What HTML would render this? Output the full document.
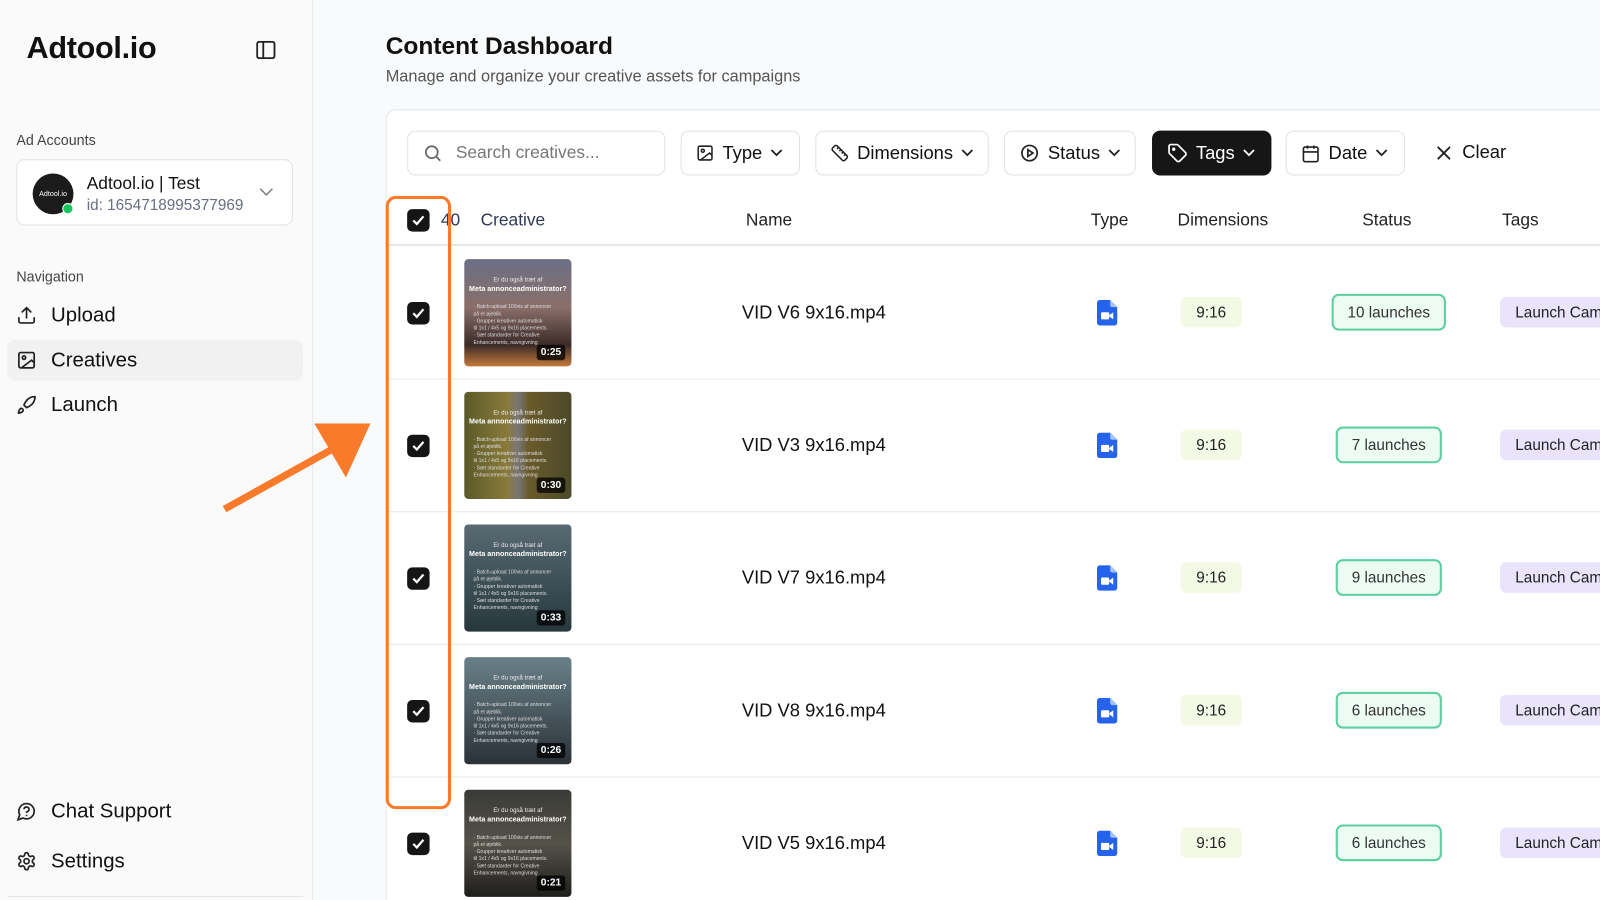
<!DOCTYPE html>
<html><head><meta charset="utf-8"><style>
*{box-sizing:border-box;margin:0;padding:0}
html,body{width:1600px;height:900px;overflow:hidden;background:#f9fafb;font-family:"Liberation Sans",sans-serif;color:#111}
#w{width:1568px;height:882px;transform:scale(1.0204);transform-origin:0 0;position:relative}
.a{position:absolute}
.side{left:0;top:0;width:307px;height:882px;background:#fafafa;border-right:1px solid #e8e8e8}
.logo{left:26px;top:31px;font-size:30px;font-weight:bold;letter-spacing:-0.3px}
.lbl{font-size:14px;color:#444}
.nav{font-size:20px;color:#111}
.card{left:378px;top:107px;width:1300px;height:800px;background:#fff;border:1px solid #e6e7ea;border-radius:10px}
.btn{top:128px;height:44px;border:1px solid #e2e2e2;border-radius:8px;background:#fff;display:flex;align-items:center;padding:0 14px;font-size:18px;gap:8px}
.hdr{top:206px;font-size:17px;color:#222}
.cb{width:22px;height:22px;background:#151515;border-radius:5px;display:flex;align-items:center;justify-content:center}
.thumb{width:105px;height:105px;border-radius:4px;overflow:hidden}
.thumb .t1{position:absolute;left:0;right:0;top:18px;text-align:center;font-size:6px;color:#eee}
.thumb .t2{position:absolute;left:0;right:0;top:26px;text-align:center;font-size:7px;color:#fff;font-weight:bold}
.thumb .b{position:absolute;left:9px;top:44px;font-size:5px;color:#ddd;line-height:7px}
.thumb .d{position:absolute;right:6px;bottom:6px;background:rgba(0,0,0,.75);color:#fff;font-size:10px;font-weight:bold;padding:2px 4px;border-radius:3px}
.nm{font-size:18px}
.dim{width:60px;height:30px;background:#f3f9e4;border-radius:6px;font-size:15px;display:flex;align-items:center;justify-content:center;color:#222}
.st{height:36px;border:2px solid #5bcf9f;background:#ecfbf3;border-radius:7px;font-size:15px;display:flex;align-items:center;justify-content:center;color:#333}
.tag{left:1470px;width:120px;height:30px;background:#e9e4fc;border-radius:6px;font-size:15px;display:flex;align-items:center;padding-left:15px;color:#222;white-space:nowrap}
.sep{left:379px;width:1200px;height:1px;background:#e8e8e8}
</style></head><body><div id="w">
<div class="a side"></div>
<div class="a logo">Adtool.io</div>
<svg class="a" style="left:251px;top:40px" width="19" height="18" viewBox="0 0 19 18" fill="none" stroke="#222" stroke-width="1.8"><rect x="1" y="1" width="17" height="16" rx="2"/><line x1="7" y1="1" x2="7" y2="17"/></svg>
<div class="a lbl" style="left:16px;top:129px">Ad Accounts</div>
<div class="a" style="left:16px;top:156px;width:271px;height:65px;background:#fff;border:1px solid #e3e3e3;border-radius:8px"></div>
<div class="a" style="left:32px;top:170px;width:40px;height:40px;border-radius:50%;background:#1b1b1b;color:#fff;font-size:7px;display:flex;align-items:center;justify-content:center">Adtool.io</div>
<div class="a" style="left:61px;top:199px;width:11px;height:11px;border-radius:50%;background:#16c55a;border:1.5px solid #fff"></div>
<div class="a" style="left:85px;top:170px;font-size:17px">Adtool.io | Test</div>
<div class="a" style="left:85px;top:193px;font-size:15px;color:#666e80">id: 1654718995377969</div>
<svg class="a" style="left:254px;top:184px" width="14" height="9" viewBox="0 0 14 9" fill="none" stroke="#777" stroke-width="1.4"><path d="M1 1l6 6 6-6"/></svg>
<div class="a lbl" style="left:16px;top:263px">Navigation</div>
<div class="a" style="left:7px;top:333px;width:290px;height:40px;background:#f1f1f1;border-radius:8px"></div>
<svg class="a" style="left:16px;top:299px" width="20" height="20" viewBox="0 0 24 24" fill="none" stroke="#222" stroke-width="2" stroke-linecap="round"><path d="M21 15v4a2 2 0 0 1-2 2H5a2 2 0 0 1-2-2v-4M17 8l-5-5-5 5M12 3v12"/></svg>
<div class="a nav" style="left:50px;top:298px">Upload</div>
<svg class="a" style="left:16px;top:343px" width="20" height="20" viewBox="0 0 24 24" fill="none" stroke="#222" stroke-width="2"><rect x="3" y="3" width="18" height="18" rx="2"/><circle cx="9" cy="9" r="2"/><path d="M21 15l-3-3L6 21"/></svg>
<div class="a nav" style="left:50px;top:342px">Creatives</div>
<svg class="a" style="left:16px;top:387px" width="20" height="20" viewBox="0 0 24 24" fill="none" stroke="#222" stroke-width="2" stroke-linejoin="round"><path d="M4.5 16.5c-1.5 1.3-2 5-2 5s3.7-.5 5-2c.7-.8.7-2.1-.1-2.9a2.2 2.2 0 0 0-2.9-.1zM12 15l-3-3a22 22 0 0 1 2-4A13 13 0 0 1 22 2c0 2.7-.8 7.5-6 11a22 22 0 0 1-4 2z"/></svg>
<div class="a nav" style="left:50px;top:386px">Launch</div>
<svg class="a" style="left:16px;top:785px" width="20" height="20" viewBox="0 0 24 24" fill="none" stroke="#222" stroke-width="2" stroke-linecap="round"><path d="M7.9 20A9 9 0 1 0 4 16.1L2 22z"/><path d="M9.1 9a3 3 0 0 1 5.8 1c0 2-3 3-3 3M12 17h.01"/></svg>
<div class="a nav" style="left:50px;top:784px">Chat Support</div>
<svg class="a" style="left:16px;top:834px" width="20" height="20" viewBox="0 0 24 24" fill="none" stroke="#222" stroke-width="2"><circle cx="12" cy="12" r="3"/><path d="M12.2 2h-.4a2 2 0 0 0-2 2v.2a2 2 0 0 1-1 1.7l-.4.3a2 2 0 0 1-2 0l-.2-.1a2 2 0 0 0-2.7.7l-.2.4a2 2 0 0 0 .7 2.7l.2.1a2 2 0 0 1 1 1.7v.5a2 2 0 0 1-1 1.800l-.2.1a2 2 0 0 0-.7 2.7l.2.4a2 2 0 0 0 2.7.7l.2-.1a2 2 0 0 1 2 0l.4.3a2 2 0 0 1 1 1.7v.2a2 2 0 0 0 2 2h.4a2 2 0 0 0 2-2v-.2a2 2 0 0 1 1-1.7l.4-.3a2 2 0 0 1 2 0l.2.1a2 2 0 0 0 2.7-.7l.2-.4a2 2 0 0 0-.7-2.7l-.2-.1a2 2 0 0 1-1-1.7v-.5a2 2 0 0 1 1-1.8l.2-.1a2 2 0 0 0 .7-2.7l-.2-.4a2 2 0 0 0-2.7-.7l-.2.1a2 2 0 0 1-2 0l-.4-.3a2 2 0 0 1-1-1.7V4a2 2 0 0 0-2-2z"/></svg>
<div class="a nav" style="left:50px;top:833px">Settings</div>
<div class="a" style="left:7px;top:878px;width:290px;height:1px;background:#e3e3e3"></div>

<div class="a" style="left:378px;top:32px;font-size:24px;font-weight:bold">Content Dashboard</div>
<div class="a" style="left:378px;top:67px;font-size:16px;color:#555">Manage and organize your creative assets for campaigns</div>
<div class="a card"></div>

<div class="a btn" style="left:399px;width:253px;color:#777;font-size:17px"><svg width="20" height="20" viewBox="0 0 24 24" fill="none" stroke="#666" stroke-width="2"><circle cx="11" cy="11" r="7"/><path d="M21 21l-5-5"/></svg>&nbsp;Search creatives...</div>
<div class="a btn" style="left:667px;width:117px"><svg width="18" height="18" viewBox="0 0 24 24" fill="none" stroke="#222" stroke-width="2"><rect x="3" y="3" width="18" height="18" rx="2"/><circle cx="9" cy="9" r="2"/><path d="M21 15l-3-3L6 21"/></svg>Type<svg width="12" height="8" viewBox="0 0 12 8" fill="none" stroke="#222" stroke-width="1.8"><path d="M1 1l5 5 5-5"/></svg></div>
<div class="a btn" style="left:799px;width:170px"><svg width="18" height="18" viewBox="0 0 24 24" fill="none" stroke="#222" stroke-width="2"><path d="M21.3 15.3a2.4 2.4 0 0 1 0 3.4l-2.6 2.6a2.4 2.4 0 0 1-3.4 0L2.7 8.7a2.4 2.4 0 0 1 0-3.4l2.6-2.6a2.4 2.4 0 0 1 3.4 0zM14.5 12.5l2-2M11.5 9.5l2-2M8.5 6.5l2-2M17.5 15.5l2-2"/></svg>Dimensions<svg width="12" height="8" viewBox="0 0 12 8" fill="none" stroke="#222" stroke-width="1.8"><path d="M1 1l5 5 5-5"/></svg></div>
<div class="a btn" style="left:984px;width:129px"><svg width="20" height="20" viewBox="0 0 24 24" fill="none" stroke="#222" stroke-width="2"><circle cx="12" cy="12" r="9"/><path d="M10 8l6 4-6 4z"/></svg>Status<svg width="12" height="8" viewBox="0 0 12 8" fill="none" stroke="#222" stroke-width="1.8"><path d="M1 1l5 5 5-5"/></svg></div>
<div class="a btn" style="left:1129px;width:117px;background:#161616;color:#fff;border-color:#161616"><svg width="20" height="20" viewBox="0 0 24 24" fill="none" stroke="#fff" stroke-width="2"><path d="M12.6 2.6A2 2 0 0 0 11.2 2H4a2 2 0 0 0-2 2v7.2a2 2 0 0 0 .6 1.4l8.7 8.7a2.4 2.4 0 0 0 3.4 0l6.6-6.6a2.4 2.4 0 0 0 0-3.4z"/><circle cx="7.5" cy="7.5" r="1"/></svg>Tags<svg width="12" height="8" viewBox="0 0 12 8" fill="none" stroke="#fff" stroke-width="1.8"><path d="M1 1l5 5 5-5"/></svg></div>
<div class="a btn" style="left:1260px;width:117px"><svg width="19" height="19" viewBox="0 0 24 24" fill="none" stroke="#222" stroke-width="2"><rect x="3" y="4" width="18" height="18" rx="2"/><path d="M16 2v4M8 2v4M3 10h18"/></svg>Date<svg width="12" height="8" viewBox="0 0 12 8" fill="none" stroke="#222" stroke-width="1.8"><path d="M1 1l5 5 5-5"/></svg></div>
<div class="a" style="left:1407px;top:139px;font-size:18px;display:flex;align-items:center;gap:10px"><svg width="16" height="16" viewBox="0 0 16 16" stroke="#222" stroke-width="1.8"><path d="M2 2l12 12M14 2L2 14"/></svg>Clear</div>

<div class="a cb" style="left:399px;top:205px"><svg width="14" height="12" viewBox="0 0 14 12" fill="none" stroke="#fff" stroke-width="2.2"><path d="M2 6l3.5 3.5L12 2"/></svg></div>
<div class="a hdr" style="left:432px;color:#2e3a55">40</div>
<div class="a hdr" style="left:471px;color:#2e3a55">Creative</div>
<div class="a hdr" style="left:731px">Name</div>
<div class="a hdr" style="left:1069px">Type</div>
<div class="a hdr" style="left:1154px">Dimensions</div>
<div class="a hdr" style="left:1335px">Status</div>
<div class="a hdr" style="left:1472px">Tags</div>
<div class="a" style="left:379px;top:239px;width:1200px;height:2px;background:#e6e6e6"></div>

<div class="a sep" style="top:371px"></div>
<div class="a sep" style="top:501px"></div>
<div class="a sep" style="top:631px"></div>
<div class="a sep" style="top:761px"></div>

<div class="a cb" style="left:399px;top:296px"><svg width="14" height="12" viewBox="0 0 14 12" fill="none" stroke="#fff" stroke-width="2.2"><path d="M2 6l3.5 3.5L12 2"/></svg></div>
<div class="a thumb" style="left:455px;top:254px;background:linear-gradient(180deg,#6b6f86 0%,#8a6f6a 45%,#3a2a28 80%,#c27a3a 100%)"><div class="t1">Er du også træt af</div><div class="t2">Meta annonceadministrator?</div><div class="b">· Batch-upload 100vis af annoncer<br>på et øjeblik.<br>· Grupper kreativer automatisk<br>til 1x1 / 4x5 og 9x16 placements.<br>· Sæt standarder for Creative<br>Enhancements, navngivning</div><div class="d">0:25</div></div>
<div class="a nm" style="left:727px;top:296px">VID V6 9x16.mp4</div>
<div class="a cb" style="left:399px;top:426px"><svg width="14" height="12" viewBox="0 0 14 12" fill="none" stroke="#fff" stroke-width="2.2"><path d="M2 6l3.5 3.5L12 2"/></svg></div>
<div class="a thumb" style="left:455px;top:384px;background:linear-gradient(90deg,#5a5a2a 0%,#8a7a3a 40%,#777 50%,#6a5a2a 60%,#4a4a2a 100%)"><div class="t1">Er du også træt af</div><div class="t2">Meta annonceadministrator?</div><div class="b">· Batch-upload 100vis af annoncer<br>på et øjeblik.<br>· Grupper kreativer automatisk<br>til 1x1 / 4x5 og 9x16 placements.<br>· Sæt standarder for Creative<br>Enhancements, navngivning</div><div class="d">0:30</div></div>
<div class="a nm" style="left:727px;top:426px">VID V3 9x16.mp4</div>
<div class="a cb" style="left:399px;top:556px"><svg width="14" height="12" viewBox="0 0 14 12" fill="none" stroke="#fff" stroke-width="2.2"><path d="M2 6l3.5 3.5L12 2"/></svg></div>
<div class="a thumb" style="left:455px;top:514px;background:linear-gradient(180deg,#5a6a72 0%,#3e5258 50%,#27383c 100%)"><div class="t1">Er du også træt af</div><div class="t2">Meta annonceadministrator?</div><div class="b">· Batch-upload 100vis af annoncer<br>på et øjeblik.<br>· Grupper kreativer automatisk<br>til 1x1 / 4x5 og 9x16 placements.<br>· Sæt standarder for Creative<br>Enhancements, navngivning</div><div class="d">0:33</div></div>
<div class="a nm" style="left:727px;top:556px">VID V7 9x16.mp4</div>
<div class="a cb" style="left:399px;top:686px"><svg width="14" height="12" viewBox="0 0 14 12" fill="none" stroke="#fff" stroke-width="2.2"><path d="M2 6l3.5 3.5L12 2"/></svg></div>
<div class="a thumb" style="left:455px;top:644px;background:linear-gradient(180deg,#6a8088 0%,#4a5a60 50%,#2a3238 100%)"><div class="t1">Er du også træt af</div><div class="t2">Meta annonceadministrator?</div><div class="b">· Batch-upload 100vis af annoncer<br>på et øjeblik.<br>· Grupper kreativer automatisk<br>til 1x1 / 4x5 og 9x16 placements.<br>· Sæt standarder for Creative<br>Enhancements, navngivning</div><div class="d">0:26</div></div>
<div class="a nm" style="left:727px;top:686px">VID V8 9x16.mp4</div>
<div class="a cb" style="left:399px;top:816px"><svg width="14" height="12" viewBox="0 0 14 12" fill="none" stroke="#fff" stroke-width="2.2"><path d="M2 6l3.5 3.5L12 2"/></svg></div>
<div class="a thumb" style="left:455px;top:774px;background:linear-gradient(180deg,#3a3a36 0%,#55524a 50%,#1e1e1c 100%)"><div class="t1">Er du også træt af</div><div class="t2">Meta annonceadministrator?</div><div class="b">· Batch-upload 100vis af annoncer<br>på et øjeblik.<br>· Grupper kreativer automatisk<br>til 1x1 / 4x5 og 9x16 placements.<br>· Sæt standarder for Creative<br>Enhancements, navngivning</div><div class="d">0:21</div></div>
<div class="a nm" style="left:727px;top:816px">VID V5 9x16.mp4</div>

<svg class="a" style="left:1075px;top:294px" width="20" height="25" viewBox="0 0 20 25"><path d="M3 0h10l7 7v15a3 3 0 0 1-3 3H3a3 3 0 0 1-3-3V3a3 3 0 0 1 3-3z" fill="#2563eb"/><path d="M13 0v5a2 2 0 0 0 2 2h5z" fill="#a8c2f7"/><rect x="4" y="12" width="8" height="7" rx="1" fill="#fff"/><path d="M12 15l4-3v7l-4-3z" fill="#fff"/></svg>
<svg class="a" style="left:1075px;top:424px" width="20" height="25" viewBox="0 0 20 25"><path d="M3 0h10l7 7v15a3 3 0 0 1-3 3H3a3 3 0 0 1-3-3V3a3 3 0 0 1 3-3z" fill="#2563eb"/><path d="M13 0v5a2 2 0 0 0 2 2h5z" fill="#a8c2f7"/><rect x="4" y="12" width="8" height="7" rx="1" fill="#fff"/><path d="M12 15l4-3v7l-4-3z" fill="#fff"/></svg>
<svg class="a" style="left:1075px;top:554px" width="20" height="25" viewBox="0 0 20 25"><path d="M3 0h10l7 7v15a3 3 0 0 1-3 3H3a3 3 0 0 1-3-3V3a3 3 0 0 1 3-3z" fill="#2563eb"/><path d="M13 0v5a2 2 0 0 0 2 2h5z" fill="#a8c2f7"/><rect x="4" y="12" width="8" height="7" rx="1" fill="#fff"/><path d="M12 15l4-3v7l-4-3z" fill="#fff"/></svg>
<svg class="a" style="left:1075px;top:684px" width="20" height="25" viewBox="0 0 20 25"><path d="M3 0h10l7 7v15a3 3 0 0 1-3 3H3a3 3 0 0 1-3-3V3a3 3 0 0 1 3-3z" fill="#2563eb"/><path d="M13 0v5a2 2 0 0 0 2 2h5z" fill="#a8c2f7"/><rect x="4" y="12" width="8" height="7" rx="1" fill="#fff"/><path d="M12 15l4-3v7l-4-3z" fill="#fff"/></svg>
<svg class="a" style="left:1075px;top:814px" width="20" height="25" viewBox="0 0 20 25"><path d="M3 0h10l7 7v15a3 3 0 0 1-3 3H3a3 3 0 0 1-3-3V3a3 3 0 0 1 3-3z" fill="#2563eb"/><path d="M13 0v5a2 2 0 0 0 2 2h5z" fill="#a8c2f7"/><rect x="4" y="12" width="8" height="7" rx="1" fill="#fff"/><path d="M12 15l4-3v7l-4-3z" fill="#fff"/></svg>

<div class="a dim" style="left:1157px;top:291px">9:16</div>
<div class="a dim" style="left:1157px;top:421px">9:16</div>
<div class="a dim" style="left:1157px;top:551px">9:16</div>
<div class="a dim" style="left:1157px;top:681px">9:16</div>
<div class="a dim" style="left:1157px;top:811px">9:16</div>

<div class="a st" style="left:1305px;top:288px;width:112px">10 launches</div>
<div class="a st" style="left:1309px;top:418px;width:104px">7 launches</div>
<div class="a st" style="left:1309px;top:548px;width:104px">9 launches</div>
<div class="a st" style="left:1309px;top:678px;width:104px">6 launches</div>
<div class="a st" style="left:1309px;top:808px;width:104px">6 launches</div>

<div class="a tag" style="top:291px">Launch Campaign</div>
<div class="a tag" style="top:421px">Launch Campaign</div>
<div class="a tag" style="top:551px">Launch Campaign</div>
<div class="a tag" style="top:681px">Launch Campaign</div>
<div class="a tag" style="top:811px">Launch Campaign</div>

<div class="a" style="left:378px;top:192px;width:64px;height:601px;border:3px solid #f97a2a;border-radius:10px"></div>
<svg class="a" style="left:215px;top:410px" width="150" height="95" viewBox="0 0 150 95"><line x1="5" y1="89" x2="120" y2="25" stroke="#f97a2a" stroke-width="7"/><path d="M93 5L148 5L124 58z" fill="#f97a2a"/></svg>
</div></body></html>
